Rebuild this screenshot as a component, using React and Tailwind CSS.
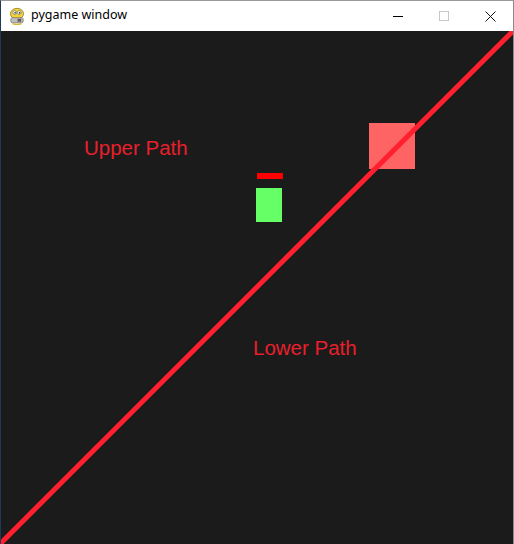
import React from 'react';

const PygameIcon = () => (
  <svg width="18" height="18" viewBox="0 0 16 16">
    <ellipse cx="8" cy="6" rx="5.8" ry="4.8" fill="#f2d43a" stroke="#9a8420" strokeWidth="0.8" />
    <circle cx="6" cy="5" r="1.7" fill="#fff" stroke="#555" strokeWidth="0.5" />
    <circle cx="10" cy="5" r="1.7" fill="#fff" stroke="#555" strokeWidth="0.5" />
    <circle cx="6.3" cy="5.2" r="0.7" fill="#222" />
    <circle cx="10.3" cy="5.2" r="0.7" fill="#222" />
    <rect x="2.5" y="9.5" width="11" height="4.5" rx="1.5" fill="#bfbfbf" stroke="#666" strokeWidth="0.6" />
    <rect x="8.5" y="10.5" width="3.2" height="2.6" fill="#6b5a58" />
    <path d="M4 14.8 Q8 16.2 12 14.8" stroke="#d8b830" strokeWidth="1.2" fill="none" />
  </svg>
);

const Canvas = () => (
  <div className="relative flex-1 bg-[#1b1b1b] overflow-hidden">
    <div className="absolute left-[368px] top-[92px] w-[46px] h-[46px] bg-[#ff6464]" />
    <div className="absolute left-[256px] top-[142px] w-[26px] h-[6px] bg-[#ff0000]" />
    <div className="absolute left-[255px] top-[157px] w-[26px] h-[34px] bg-[#66ff66]" />
    <svg className="absolute left-0 top-0" width="513" height="513" viewBox="0 0 513 513">
      <line x1="-2" y1="514" x2="514" y2="-2" stroke="#ff1f2e" strokeWidth="5" />
    </svg>
    <span className="absolute left-[83px] top-[107px] text-[20.5px] leading-none text-[#e8202c] font-['Liberation_Sans',Arial,sans-serif]">
      Upper Path
    </span>
    <span className="absolute left-[252px] top-[307px] text-[20.5px] leading-none text-[#e8202c] font-['Liberation_Sans',Arial,sans-serif]">
      Lower Path
    </span>
  </div>
);

export default function App() {
  return (
    <div className="w-[514px] h-[544px] flex flex-col bg-white border-t border-t-[#9a9a9a] border-r border-r-[#8a8a8a] border-l border-l-[#1e3a56] overflow-hidden">
      <div className="h-[30px] shrink-0 flex items-center bg-white">
        <div className="pl-[7px] pr-[5px] flex items-center">
          <PygameIcon />
        </div>
        <span className="text-[12.5px] text-black font-['Noto_Sans','Open_Sans',sans-serif] -mt-[1px]">pygame window</span>
        <div className="ml-auto flex items-center h-full">
          <div className="w-[46px] h-full flex items-center justify-center">
            <div className="w-[10px] h-px bg-black" />
          </div>
          <div className="w-[46px] h-full flex items-center justify-center">
            <div className="w-[10px] h-[10px] border border-[#c8c8c8]" />
          </div>
          <div className="w-[46px] h-full flex items-center justify-center">
            <svg width="11" height="11" viewBox="0 0 11 11">
              <path d="M0.5 0.5 L10.5 10.5 M10.5 0.5 L0.5 10.5" stroke="#111" strokeWidth="1" />
            </svg>
          </div>
        </div>
      </div>
      <Canvas />
    </div>
  );
}
